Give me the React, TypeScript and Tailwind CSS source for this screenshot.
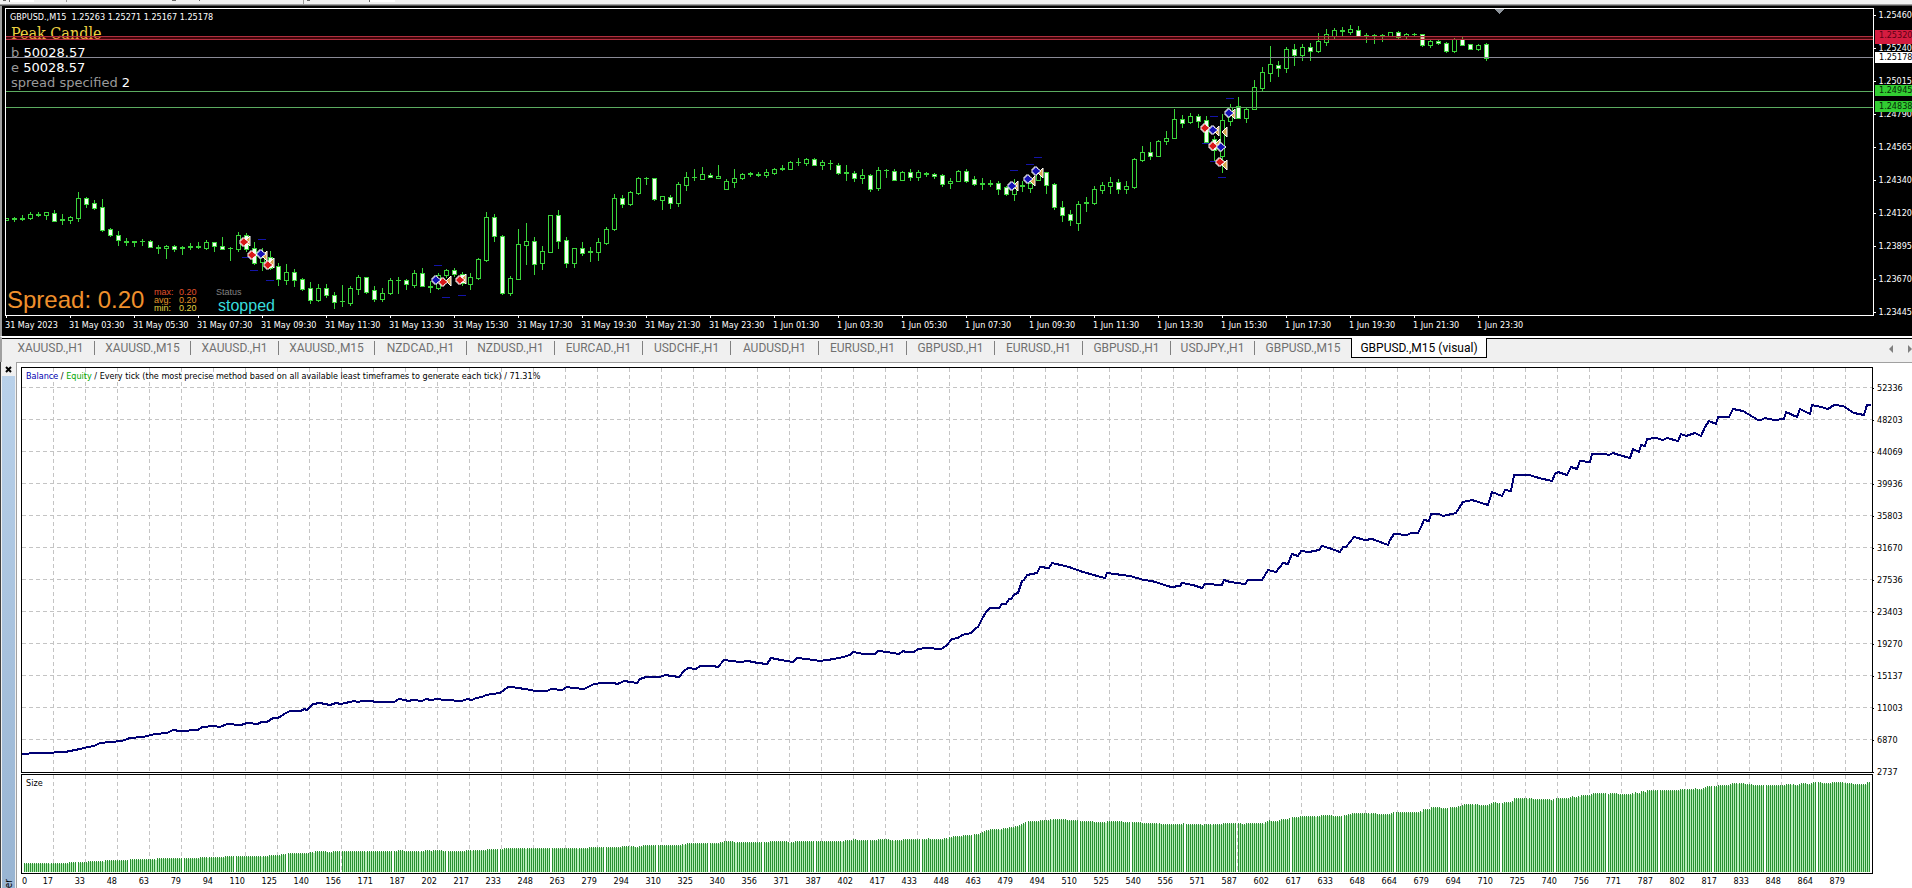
// src/App.tsx
import { useState } from 'react'
import clsx from 'clsx'

// ── Price chart data ──────────────────────────────────────────────
// [high, body top, body bottom, low, 1 = bearish (filled)]
type Candle = [number, number, number, number, number]

const CANDLES: Candle[] = [
  [218,218,220,220,0],[217,218,219,221,0],[215,218,219,220,0],[212,214,218,219,0],[212,214,215,216,0],
  [212,212,215,219,0],[210,213,221,221,1],[214,219,220,224,0],[216,217,220,223,0],[192,198,218,221,0],
  [197,198,204,207,1],[200,203,208,209,1],[199,207,230,231,1],[228,229,235,236,1],[231,235,240,245,1],
  [238,241,242,245,1],[241,241,242,246,0],[239,241,241,245,0],[240,241,247,247,1],[245,247,248,253,0],
  [245,246,248,258,0],[245,246,249,251,1],[246,247,248,254,0],[243,246,247,249,0],[242,246,247,248,0],
  [240,242,248,249,0],[242,242,246,251,1],[237,246,249,249,1],[247,248,248,260,0],[232,235,249,251,0],
  [233,235,249,251,1],[242,248,263,264,1],[248,257,262,270,0],[251,257,268,269,1],[263,266,279,285,1],
  [264,272,280,284,0],[269,272,280,286,1],[278,279,289,290,1],[282,288,300,303,1],[284,288,300,301,0],
  [284,288,295,297,1],[292,295,302,308,1],[285,301,301,306,0],[286,288,303,305,0],[275,277,289,294,0],
  [277,277,292,293,1],[286,290,299,301,1],[288,293,299,301,0],[278,280,293,294,0],[277,280,280,293,0],
  [279,280,284,289,1],[270,273,285,287,0],[268,273,286,286,1],[281,286,287,292,0],[273,275,288,289,0],
  [269,270,275,277,0],[268,270,274,276,1],[272,274,283,285,1],[273,277,284,289,0],[258,259,278,279,0],
  [212,217,260,261,0],[214,217,236,241,1],[235,236,293,294,1],[276,278,293,295,0],[229,244,279,279,0],
  [223,241,245,264,0],[237,241,264,274,1],[246,251,263,269,0],[215,215,252,252,0],[210,215,241,248,1],
  [237,240,263,267,1],[248,248,263,267,0],[242,248,253,255,1],[247,251,252,261,0],[238,242,252,260,0],
  [227,229,243,244,0],[194,198,229,230,0],[195,198,204,207,1],[191,192,204,205,0],[177,178,193,194,0],
  [177,178,178,184,0],[178,178,199,200,1],[196,196,200,209,0],[195,197,203,208,1],[182,184,203,206,0],
  [172,177,185,190,0],[169,177,177,180,0],[167,174,179,179,0],[173,175,177,177,1],[165,176,178,178,0],
  [179,181,189,189,0],[169,178,182,187,0],[173,174,178,179,0],[172,173,174,176,0],[172,174,175,176,0],
  [169,172,175,177,0],[168,169,173,174,0],[165,168,169,170,0],[161,162,169,169,0],[158,162,162,165,0],
  [158,159,163,165,0],[158,159,165,165,1],[160,162,165,169,0],[160,163,163,169,0],[163,165,173,174,1],
  [165,172,173,180,0],[171,173,178,181,1],[169,175,178,183,0],[174,175,189,191,1],[167,170,188,190,0],
  [169,170,170,177,0],[169,171,180,180,1],[171,172,180,180,0],[169,172,177,180,1],[170,172,177,180,0],
  [172,173,174,176,0],[173,174,176,178,1],[174,175,184,186,1],[178,181,183,188,0],[170,171,181,181,0],
  [169,171,181,182,1],[176,179,184,185,1],[178,183,184,189,0],[180,183,184,186,0],[181,183,189,194,1],
  [186,187,194,195,1],[179,188,194,200,0],[181,185,186,191,0],[180,183,188,192,0],[169,173,180,180,0],
  [172,172,185,193,1],[183,184,207,209,1],[201,207,215,221,1],[210,214,220,225,1],[201,204,223,230,0],
  [197,202,203,211,0],[186,189,203,204,0],[182,185,190,193,0],[177,182,186,193,0],[179,182,189,193,1],
  [181,186,189,193,0],[158,159,187,188,0],[146,152,160,161,0],[142,152,156,159,1],[140,141,156,156,0],
  [131,138,141,144,0],[109,119,138,138,0],[115,119,123,127,1],[113,116,122,123,0],[114,116,121,127,1],
  [116,120,142,142,1],[136,139,150,160,1],[114,120,156,172,0],[104,107,121,125,0],[97,106,118,118,1],
  [108,109,118,122,0],[80,87,109,109,0],[67,72,88,91,0],[46,64,73,81,0],[61,65,68,76,1],
  [47,49,68,72,0],[44,49,55,65,1],[44,47,55,60,0],[43,47,51,60,1],[33,41,51,52,0],
  [29,34,42,45,0],[28,30,36,39,0],[27,30,31,35,0],[25,29,32,34,0],[26,30,36,36,1],
  [33,35,35,42,0],[34,35,35,43,0],[34,35,35,41,0],[32,32,36,36,0],[31,32,37,38,1],
  [33,34,36,39,0],[33,34,34,36,0],[34,34,45,46,1],[40,41,45,47,0],[40,41,43,44,1],
  [42,43,51,52,1],[38,39,51,52,0],[37,39,45,45,1],[44,44,49,49,1],[44,45,49,50,0],
  [43,44,58,60,1],
]

const EXITS = [
  [248,241],[265,256],[272,263],[449,281],[464,279],[1016,186],[1033,181],[1041,173],
  [1217,131],[1225,132],[1218,144],[1225,165],[1233,114],
]
const BUYS  = [[261,254],[436,280],[1012,186],[1028,179],[1036,171],[1213,130],[1221,147],[1229,113]]
const SELLS = [[244,242],[252,255],[268,265],[443,282],[460,280],[1205,128],[1213,146],[1220,162]]
const STOPS = [
  [262,239],[246,257],[254,270],[270,280],[438,265],[446,297],[462,295],[1014,170],
  [1030,164],[1038,157],[1214,116],[1206,143],[1214,161],[1222,177],[1230,98],
]

const DATES = [
  '31 May 2023', '31 May 03:30', '31 May 05:30', '31 May 07:30', '31 May 09:30', '31 May 11:30',
  '31 May 13:30', '31 May 15:30', '31 May 17:30', '31 May 19:30', '31 May 21:30', '31 May 23:30',
  '1 Jun 01:30', '1 Jun 03:30', '1 Jun 05:30', '1 Jun 07:30', '1 Jun 09:30', '1 Jun 11:30',
  '1 Jun 13:30', '1 Jun 15:30', '1 Jun 17:30', '1 Jun 19:30', '1 Jun 21:30', '1 Jun 23:30',
]
const PRICES = [
  '1.25460', '1.25240', '1.25015', '1.24790', '1.24565',
  '1.24340', '1.24120', '1.23895', '1.23670', '1.23445',
]
const BADGES = [
  { price: '1.25320', cls: 'top-[22px] h-[14px] bg-[#d41c40] text-[#5c0014]' },
  { price: '1.25178', cls: 'top-[44px] h-[11px] bg-white text-black' },
  { price: '1.24945', cls: 'top-[77px] h-[11px] bg-[#32cd32] text-[#062806]' },
  { price: '1.24838', cls: 'top-[93px] h-[11px] bg-[#32cd32] text-[#062806]' },
]

// ── Tabs ──────────────────────────────────────────────────────────
const TABS = [
  { name: 'XAUUSD.,H1',  w: 'w-[88px]' },
  { name: 'XAUUSD.,M15', w: 'w-[96px]' },
  { name: 'XAUUSD.,H1',  w: 'w-[88px]' },
  { name: 'XAUUSD.,M15', w: 'w-[96px]' },
  { name: 'NZDCAD.,H1',  w: 'w-[92px]' },
  { name: 'NZDUSD.,H1',  w: 'w-[88px]' },
  { name: 'EURCAD.,H1',  w: 'w-[88px]' },
  { name: 'USDCHF.,H1',  w: 'w-[88px]' },
  { name: 'AUDUSD,H1',   w: 'w-[88px]' },
  { name: 'EURUSD.,H1',  w: 'w-[88px]' },
  { name: 'GBPUSD.,H1',  w: 'w-[88px]' },
  { name: 'EURUSD.,H1',  w: 'w-[88px]' },
  { name: 'GBPUSD.,H1',  w: 'w-[88px]' },
  { name: 'USDJPY.,H1',  w: 'w-[84px]' },
  { name: 'GBPUSD.,M15', w: 'w-[96px]' },
  { name: 'GBPUSD.,M15 (visual)', w: 'w-[136px]' },
]

// ── Balance curve ─────────────────────────────────────────────────
const BALANCE: [number, number][] = [
  [22,754],[37,753],[44,753],[65,752],[80,749],[88,747],[94,746],[100,743],[122,741],[130,738],[143,737],
  [155,734],[167,733],[173,730],[180,731],[198,730],[202,727],[214,726],[220,727],[227,724],[241,725],
  [247,723],[258,724],[261,722],[267,722],[273,718],[278,718],[286,713],[290,711],[301,711],[304,709],
  [307,710],[313,704],[320,703],[330,705],[336,703],[341,704],[354,701],[358,702],[362,701],[371,701],
  [376,702],[394,702],[399,699],[405,700],[408,701],[413,700],[422,701],[426,699],[431,700],[437,699],
  [445,700],[462,701],[467,699],[472,700],[476,698],[482,697],[486,695],[492,694],[500,693],[504,690],
  [508,687],[512,687],[531,690],[535,691],[547,691],[551,689],[562,690],[567,687],[573,688],[584,689],
  [594,684],[602,683],[614,683],[617,684],[620,683],[624,681],[631,682],[637,683],[640,679],[646,677],
  [660,677],[665,675],[679,677],[684,671],[688,668],[696,669],[700,666],[713,666],[718,667],[724,660],
  [740,662],[748,661],[758,663],[767,664],[771,658],[781,660],[793,662],[797,658],[807,659],[820,661],
  [834,659],[843,657],[850,655],[853,652],[864,654],[875,654],[878,651],[887,652],[899,654],[903,651],
  [906,652],[914,652],[918,649],[927,648],[941,649],[946,646],[952,639],[958,638],[962,635],[971,633],
  [976,628],[978,627],[982,619],[986,612],[990,608],[999,608],[1002,604],[1006,604],[1009,599],
  [1011,599],[1015,594],[1018,593],[1022,581],[1024,580],[1027,575],[1037,573],[1040,567],[1049,568],
  [1052,563],[1069,567],[1083,572],[1101,577],[1105,578],[1107,573],[1130,576],[1144,580],[1152,581],
  [1171,587],[1180,586],[1182,583],[1193,585],[1202,588],[1205,584],[1222,585],[1224,580],[1230,582],
  [1245,584],[1248,580],[1262,580],[1268,570],[1276,572],[1283,563],[1288,564],[1292,554],[1298,556],
  [1301,551],[1309,552],[1319,550],[1322,546],[1329,548],[1340,552],[1343,547],[1346,547],[1354,537],
  [1365,540],[1372,539],[1388,545],[1390,540],[1394,534],[1407,535],[1411,533],[1418,533],[1421,527],
  [1424,520],[1429,521],[1431,514],[1439,514],[1443,516],[1456,513],[1459,508],[1463,502],[1472,500],
  [1488,505],[1492,492],[1502,496],[1505,490],[1511,491],[1514,475],[1529,475],[1539,478],[1552,481],
  [1555,474],[1558,472],[1567,475],[1571,467],[1577,469],[1580,461],[1590,462],[1592,454],[1605,454],
  [1609,455],[1613,453],[1619,455],[1630,458],[1633,449],[1639,452],[1641,445],[1645,446],[1647,439],
  [1656,438],[1663,440],[1667,438],[1678,441],[1681,434],[1686,436],[1695,433],[1701,436],[1705,427],
  [1709,421],[1716,424],[1718,417],[1729,417],[1733,409],[1743,411],[1758,420],[1761,420],[1765,418],
  [1774,420],[1784,419],[1786,412],[1797,417],[1800,409],[1810,414],[1812,405],[1821,407],[1828,409],
  [1834,405],[1843,406],[1854,413],[1864,415],[1867,405],[1871,405],
]

const LEVELS = [
  52336, 48203, 44069, 39936, 35803, 31670, 27536, 23403, 19270, 15137, 11003, 6870, 2737,
]
const TRADES = [
  17, 33, 48, 63, 79, 94, 110, 125, 140, 156, 171, 187, 202, 217, 233, 248, 263, 279, 294,
  310, 325, 340, 356, 371, 387, 402, 417, 433, 448, 463, 479, 494, 510, 525, 540, 556, 571,
  587, 602, 617, 633, 648, 664, 679, 694, 710, 725, 740, 756, 771, 787, 802, 817, 833, 848,
  864, 879,
]

const COLS = Array.from({ length: 57 }, (_, i) => 53 + i * 32)
const ROWS = Array.from({ length: 12 }, (_, i) => 387 + i * 32)

function balanceAt(x: number) {
  const i = Math.max(1, BALANCE.findIndex(p => p[0] >= x))
  const [x0, y0] = BALANCE[i - 1]
  const [x1, y1] = BALANCE[i]
  const y = y0 + ((x - x0) / (x1 - x0)) * (y1 - y0)
  return 2737 + ((771 - y) * (52336 - 2737)) / 384
}

// One bar per trade, height follows the balance
function sizeBars() {
  let bars = ''
  let gaps = ''
  let wide = 0
  for (let i = 0; i < 889; i++) {
    const x = Math.floor(24 + i * 2.0788)
    const next = Math.floor(24 + (i + 1) * 2.0788)
    const h = Math.round((balanceAt(x) * 90) / 50000)
    bars += `M${x} 872v${-h}h1v${h}z`
    if (next - x > 2) wide++
    if (next - x > 2 && wide % 2 === 0) continue
    gaps += `M${x + 1} 872v${1 - h}h${next - x - 1}v${h - 1}z`
  }
  return { bars, gaps }
}
const SIZE = sizeBars()

export default function App() {
  return (
    <div className="min-h-screen bg-[#f0f0f0] font-['DejaVu_Sans_Condensed','DejaVu_Sans',sans-serif] text-[9px] text-black overflow-hidden">
      <ToolbarEdge />
      <PriceChart />
      <TabBar />
      <Tester />
    </div>
  )
}

// ── Lower edge of the toolbar ─────────────────────────────────────
function ToolbarEdge() {
  return (
    <div className="h-[6px] border-b border-[#555555]">
      <svg className="block h-[5px] w-full border-b border-[#a0a0a0]" viewBox="0 0 1912 4" preserveAspectRatio="none" shapeRendering="crispEdges">
        <rect x="9" width="25" height="2" fill="#fff" />
        <rect x="369" width="26" height="2" fill="#fff" />
        <path d="M3 0h3v1h-3zM9 0h1v2h-1zM172 0h4v1h-4zM199 0h1v1h-1zM307 0h3v1h-3zM369 0h1v2h-1z" fill="#666" />
        <path d="M66 0h1v2h-1zM303 0h1v4h-1z" fill="#999" />
      </svg>
    </div>
  )
}

// ══ PRICE CHART ══
function PriceChart() {
  return (
    <section className="flex border-l-2 border-[#a0a0a0] bg-black pl-[3px] pt-[2px] text-white">
      <div className="min-w-0 flex-1">
        <div className="relative flex h-[308px] flex-col justify-between border border-white">
          <div className="flex flex-col pl-1 pt-[2px]">
            <p className="whitespace-pre leading-3">GBPUSD.,M15  1.25263 1.25271 1.25167 1.25178</p>
            <h1 className="pl-px font-['DejaVu_Serif_Condensed','DejaVu_Serif',serif] text-base leading-[22px] text-[#ecd040]">Peak Candle</h1>
            <div className="pl-px font-['DejaVu_Sans',sans-serif] text-[13px] leading-[15px] text-[#9a9a9a]">
              <p>b <span className="text-white">50028.57</span></p>
              <p>e <span className="text-white">50028.57</span></p>
              <p>spread specified <span className="text-white">2</span></p>
            </div>
          </div>

          <div className="flex items-start pl-px font-['Liberation_Sans',sans-serif]">
            <p className="w-[147px] text-2xl leading-[30px] text-[#f0902c]">Spread: 0.20</p>
            <dl className="grid w-[62px] grid-cols-[25px_1fr] pt-[3px] leading-2">
              <dt className="text-[#e0502c]">max:</dt><dd className="text-[#e0502c]">0.20</dd>
              <dt className="text-[#e09428]">avg:</dt><dd className="text-[#e09428]">0.20</dd>
              <dt className="text-[#e0d440]">min:</dt><dd className="text-[#e0d440]">0.20</dd>
            </dl>
            <div className="pt-[2px]">
              <p className="leading-[10px] text-[#808080]">Status</p>
              <p className="pl-[2px] text-base leading-[18px] text-[#38dcdc]">stopped</p>
            </div>
          </div>

          <Candles />
        </div>

        {/* Time axis */}
        <div className="grid h-5 grid-cols-[repeat(24,minmax(0,64fr))_minmax(0,333fr)]">
          {DATES.map(d => (
            <div key={d}>
              <div className="ml-px h-[2px] w-px bg-white" />
              <p className="whitespace-nowrap text-[9px] leading-[14px]">{d}</p>
            </div>
          ))}
        </div>
      </div>

      {/* Price axis */}
      <div className="relative w-[38px] shrink-0">
        <ul className="flex flex-col gap-[22px] pt-[2px]">
          {PRICES.map(p => (
            <li key={p} className="flex h-[11px] items-center gap-[3px] leading-[11px]">
              <span className="h-px w-[2px] bg-white" />
              {p}
            </li>
          ))}
        </ul>
        {BADGES.map(b => (
          <span key={b.price} className={clsx('absolute left-px right-0 overflow-hidden pl-1 leading-[11px]', b.cls)}>
            {b.price}
          </span>
        ))}
      </div>
    </section>
  )
}

function Candles() {
  return (
    <svg className="absolute inset-0 h-full w-full" viewBox="6 9 1867 306" preserveAspectRatio="none" shapeRendering="crispEdges">
      {CANDLES.map(([hi, top, bottom, lo, bear], i) => {
        const x = 6 + i * 8
        return (
          <g key={i}>
            {hi < top && <rect x={x} y={hi} width="1" height={top - hi} fill="#3ad43a" />}
            {lo > bottom && <rect x={x} y={bottom + 1} width="1" height={lo - bottom} fill="#3ad43a" />}
            {bottom - top < 2
              ? <rect x={x - 2} y={top} width="5" height={bottom - top + 1} fill="#3ad43a" />
              : <rect x={x - 1.5} y={top + 0.5} width="4" height={bottom - top} fill={bear ? '#f4fff0' : '#000'} stroke="#3ad43a" />}
          </g>
        )
      })}

      {/* Levels */}
      <rect x="6" y="36" width="1867" height="4" fill="#e01020" fillOpacity="0.3" />
      <path d="M6 36.5H1873M6 39.5H1873" stroke="#b03040" />
      <path d="M6 57.5H1873" stroke="#8a8a96" />
      <path d="M6 91.5H1873M6 107.5H1873" stroke="#5cac60" />
      <path d="M1494 9h10l-5 5z" fill="#8f959c" />

      {/* Trades */}
      {STOPS.map(([x, y], i) => <rect key={i} x={x - 4} y={y} width="8" height="1" fill="#1414a8" />)}
      {EXITS.map(([x, y], i) => (
        <path key={i} d={`M${x + 2} ${y - 5}v10l-5 -5z`} fill="#d8a850" stroke="#fff" shapeRendering="auto" />
      ))}
      {SELLS.map(([x, y], i) => <Arrow key={i} x={x} y={y} fill="#d81818" />)}
      {BUYS.map(([x, y], i) => <Arrow key={i} x={x} y={y} fill="#1410b4" />)}
    </svg>
  )
}

function Arrow({ x, y, fill }: { x: number; y: number; fill: string }) {
  return (
    <path
      d={`M${x - 4} ${y - 2}h2v-2h3v1l4 3l-4 3v1h-3v-2h-2z`}
      fill={fill} stroke="#fff" strokeWidth="1" shapeRendering="auto"
    />
  )
}

// ══ TABS ══
function TabBar() {
  const [active, setActive] = useState(TABS.length - 1)

  return (
    <nav className="flex h-[26px] items-start border-l-2 border-t-2 border-l-[#a0a0a0] border-t-white">
      <div className="flex h-5 min-w-0 flex-1 border-t border-black pl-[5px] font-['Roboto',sans-serif] text-xs">
        {TABS.map((t, i) => (
          <button key={i} onClick={() => setActive(i)}
            className={clsx('flex shrink-0 items-center justify-center whitespace-nowrap', t.w,
              i === active
                ? '-mt-px h-5 border-x border-b border-black bg-white text-black'
                : 'h-[18px] text-[#707070]')}>
            <span className="flex-1">{t.name}</span>
            {i < TABS.length - 2 && <span className="h-[14px] w-px bg-[#808080]" />}
          </button>
        ))}
      </div>
      <div className="flex h-5 items-center gap-[15px] border-t border-black pl-2">
        <button aria-label="Scroll left">
          <svg className="block h-2 w-1" viewBox="0 0 4 8"><path d="M4 0v8l-4-4z" fill="#808080" /></svg>
        </button>
        <button aria-label="Scroll right">
          <svg className="block h-2 w-1" viewBox="0 0 4 8"><path d="M0 0v8l4-4z" fill="#808080" /></svg>
        </button>
      </div>
    </nav>
  )
}

// ══ STRATEGY TESTER ══
function Tester() {
  return (
    <section className="flex">
      <aside className="flex w-4 shrink-0 flex-col border-l border-[#404040]">
        <button aria-label="Close" className="flex h-[14px] items-center justify-center">
          <svg className="h-[7px] w-[7px]" viewBox="0 0 7 7"><path d="M1 1l5 5M6 1l-5 5" stroke="#000" strokeWidth="2" /></svg>
        </button>
        <div className="mx-px flex flex-1 items-end bg-linear-to-b from-[#b9d1ea] to-[#98b4d2]">
          <span className="rotate-180 text-[10px] leading-[13px] [writing-mode:vertical-rl]">er</span>
        </div>
      </aside>

      <div className="flex min-w-0 flex-1 border-l border-t border-[#a0a0a0] bg-white pl-1 pt-1">
        <div className="min-w-0 flex-1">
          {/* Balance */}
          <div className="relative h-[406px] border border-black">
            <svg className="absolute inset-0 h-full w-full" viewBox="22 368 1850 404" preserveAspectRatio="none" shapeRendering="crispEdges">
              <path d={COLS.map(x => `M${x + 0.5} 368V772`).join('')} stroke="#c4c4c4" strokeDasharray="4 3" />
              <path d={ROWS.map(y => `M22 ${y + 0.5}H1872`).join('')} stroke="#c4c4c4" strokeDasharray="4 3" />
              <polyline points={BALANCE.map(p => p.join(',')).join(' ')} fill="none" stroke="#000074" strokeWidth="2" />
            </svg>
            <p className="relative pl-1 pt-[2px] leading-3">
              <span className="text-[#0000b0]">Balance</span> / <span className="text-[#00a800]">Equity</span> / Every tick (the most precise method based on all available least timeframes to generate each tick) / 71.31%
            </p>
          </div>

          {/* Size */}
          <div className="relative mt-px h-[100px] border border-black">
            <svg className="absolute inset-0 h-full w-full" viewBox="22 775 1850 98" preserveAspectRatio="none" shapeRendering="crispEdges">
              <path d={COLS.map(x => `M${x + 0.5} 775V873`).join('')} stroke="#c4c4c4" strokeDasharray="4 3" />
              <path d={SIZE.gaps} fill="#b8ecb8" />
              <path d={SIZE.bars} fill="#2a9030" />
            </svg>
            <p className="relative pl-1 pt-[2px] leading-3">Size</p>
          </div>

          {/* Trade numbers */}
          <div className="grid grid-cols-[repeat(57,minmax(0,32fr))_minmax(0,28fr)] text-right leading-[14px]">
            {TRADES.map((t, i) => (
              <div key={t} className="flex h-[14px] justify-end">
                {i === 0 && <span className="mr-auto pl-px">0</span>}
                <span>{t}</span>
              </div>
            ))}
          </div>
        </div>

        {/* Balance axis */}
        <ul className="flex w-[39px] shrink-0 flex-col gap-[21px] pt-4">
          {LEVELS.map(l => (
            <li key={l} className="flex h-[11px] items-center gap-[3px] leading-[11px]">
              <span className="h-px w-px bg-black" />
              {l}
            </li>
          ))}
        </ul>
      </div>
    </section>
  )
}
